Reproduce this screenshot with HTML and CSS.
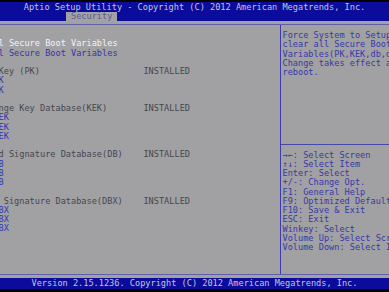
FILE: index.html
```
<!DOCTYPE html>
<html lang="en">
<head>
    <meta charset="UTF-8">
    <meta name="viewport" content="width=device-width, initial-scale=1.0">
    <title>Aptio Setup Utility - Security</title>
    <link rel="stylesheet" href="styles.css">
</head>
<body>
    <div class="header">
        <div class="title">Aptio Setup Utility - Copyright (C) 2012 American Megatrends, Inc.</div>
        <div class="tabs">
            <div class="tab">Security</div>
        </div>
    </div>

    <div class="screen">
        <div class="frame">
            <div class="left">
                <div class="list">
                    <div class="row selected">Delete All Secure Boot Variables</div>
                    <div class="row link">Export All Secure Boot Variables</div>
                    <div class="row blank"></div>
                    <div class="row"><span class="name">Platform Key (PK)</span><span>INSTALLED</span></div>
                    <div class="row link">Set New PK</div>
                    <div class="row link">Get Old PK</div>
                    <div class="row blank"></div>
                    <div class="row"><span class="name">Key Exchange Key Database(KEK)</span><span>INSTALLED</span></div>
                    <div class="row link">Set New KEK</div>
                    <div class="row link">Get Old KEK</div>
                    <div class="row link">Add New KEK</div>
                    <div class="row blank"></div>
                    <div class="row"><span class="name">Authorized Signature Database(DB)</span><span>INSTALLED</span></div>
                    <div class="row link">Set New DB</div>
                    <div class="row link">Get Old DB</div>
                    <div class="row link">Add New DB</div>
                    <div class="row blank"></div>
                    <div class="row"><span class="name">Forbidden Signature Database(DBX)</span><span>INSTALLED</span></div>
                    <div class="row link">Set New DBX</div>
                    <div class="row link">Get Old DBX</div>
                    <div class="row link">Add New DBX</div>
                </div>
            </div>
            <div class="right">
                <div class="help">
                    <div class="row">Force System to Setup Mode -</div>
                    <div class="row">clear all Secure Boot</div>
                    <div class="row">Variables(PK,KEK,db,dbx).</div>
                    <div class="row">Change takes effect after</div>
                    <div class="row">reboot.</div>
                </div>
                <div class="keys">
                    <div class="row">&rarr;&larr;: Select Screen</div>
                    <div class="row">&uarr;&darr;: Select Item</div>
                    <div class="row">Enter: Select</div>
                    <div class="row">+/-: Change Opt.</div>
                    <div class="row">F1: General Help</div>
                    <div class="row">F9: Optimized Defaults</div>
                    <div class="row">F10: Save &amp; Exit</div>
                    <div class="row">ESC: Exit</div>
                    <div class="row">Winkey: Select</div>
                    <div class="row">Volume Up: Select Screen</div>
                    <div class="row">Volume Down: Select Item</div>
                </div>
            </div>
        </div>
    </div>

    <div class="footer">Version 2.15.1236. Copyright (C) 2012 American Megatrends, Inc.</div>
</body>
</html>
```

FILE: styles.css
```
body {
    margin: 0;
    padding-top: 2px;
    width: 389px;
    height: 290px;
    overflow: hidden;
    background-color: #000;
    font-family: "DejaVu Sans Mono", "Liberation Mono", monospace;
    font-size: 8.6px;
}
.title, .tab, .row, .footer {
    white-space: pre;
}
.header {
    height: 19px;
    background-color: #0c0c9c;
    color: #c4c4d8;
    padding-top: 0.5px;
    box-sizing: border-box;
}
.title {
    text-align: center;
    line-height: 9.25px;
    height: 9.25px;
}
.tabs {
    display: flex;
    padding-left: 66px;
    margin-top: 0.5px;
}
.tab {
    background-color: #a2a2a6;
    color: #5c5c92;
    height: 8.5px;
    line-height: 8.5px;
    padding: 0 5px;
}
.screen {
    background-color: #a1a1a3;
    height: 257px;
    padding: 3px 0;
    box-sizing: border-box;
}
.frame {
    display: flex;
    height: 100%;
    border-top: 1px solid #6060a8;
    border-bottom: 1.5px solid #6060a8;
    box-sizing: border-box;
}
.row {
    height: 9.25px;
    line-height: 9.25px;
}
.left {
    width: 280px;
    flex-shrink: 0;
    border-right: 1.5px solid #3c3cae;
    overflow: hidden;
}
.list {
    margin-left: -48px;
    padding-top: 14.4px;
    color: #46464e;
}
.list .row {
    display: flex;
}
.name {
    width: 37ch;
}
.selected {
    color: #f2f2f8;
}
.link {
    color: #3434b0;
}
.right {
    flex: 1;
    overflow: hidden;
    color: #3838a8;
}
.help {
    height: 120px;
    padding: 6px 0 0 1.5px;
    border-bottom: 1px solid #4848aa;
    box-sizing: border-box;
}
.keys {
    padding: 5.5px 0 0 1.5px;
}
.footer {
    height: 11px;
    line-height: 11px;
    background-color: #0c0c9c;
    color: #c4c4d8;
    text-align: center;
}
```
